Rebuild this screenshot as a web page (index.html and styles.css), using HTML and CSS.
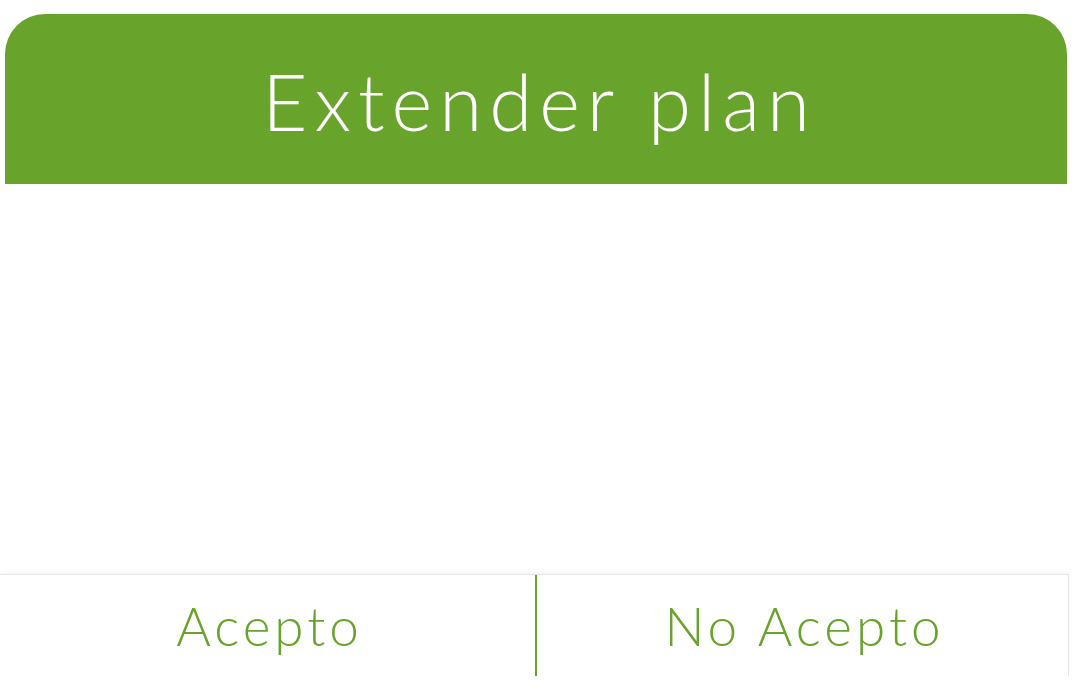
FILE: index.html
```html
<!DOCTYPE html>
<html lang="es">
<head>
  <meta charset="UTF-8">
  <meta name="viewport" content="width=device-width, initial-scale=1.0">
  <title>Extender plan</title>
  <link rel="stylesheet" href="styles.css">
</head>
<body>
  <div class="dialog">
    <div class="dialog-header">
      <h1 class="dialog-title">Extender plan</h1>
    </div>
    <div class="dialog-body"></div>
    <div class="dialog-actions">
      <button class="action-btn">Acepto</button>
      <button class="action-btn">No Acepto</button>
    </div>
  </div>
</body>
</html>
```

FILE: styles.css
```css
html, body {
  margin: 0;
  padding: 0;
  height: 100%;
  background-color: #ffffff;
}

body {
  font-family: 'Lato', 'Open Sans', sans-serif;
}

.dialog {
  display: flex;
  flex-direction: column;
  height: 693px;
}

.dialog-header {
  background-color: #68a42b;
  margin: 14px 13px 0 5px;
  height: 170px;
  border-radius: 40px 40px 0 0;
  display: flex;
  justify-content: center;
}

.dialog-title {
  margin: 0;
  padding: 40px 0 0 7px;
  color: #ffffff;
  font-size: 78px;
  font-weight: 300;
  line-height: 94px;
  letter-spacing: 7px;
}

.dialog-body {
  flex: 1;
}

.dialog-actions {
  display: grid;
  grid-template-columns: 535px 1fr;
  height: 101px;
  margin: 0 11px 17px 0;
  border-top: 1px solid #e6e6e6;
  border-right: 1px solid #e6e6e6;
  box-shadow: 0 -3px 4px rgba(0, 0, 0, 0.03);
}

.action-btn {
  background: #ffffff;
  border: none;
  color: #68a42b;
  font-family: 'Lato', 'Open Sans', sans-serif;
  font-size: 53px;
  font-weight: 300;
  letter-spacing: 4px;
  padding: 0 0 0 4px;
  cursor: pointer;
}

.action-btn + .action-btn {
  border-left: 2px solid #68a42b;
}
```
